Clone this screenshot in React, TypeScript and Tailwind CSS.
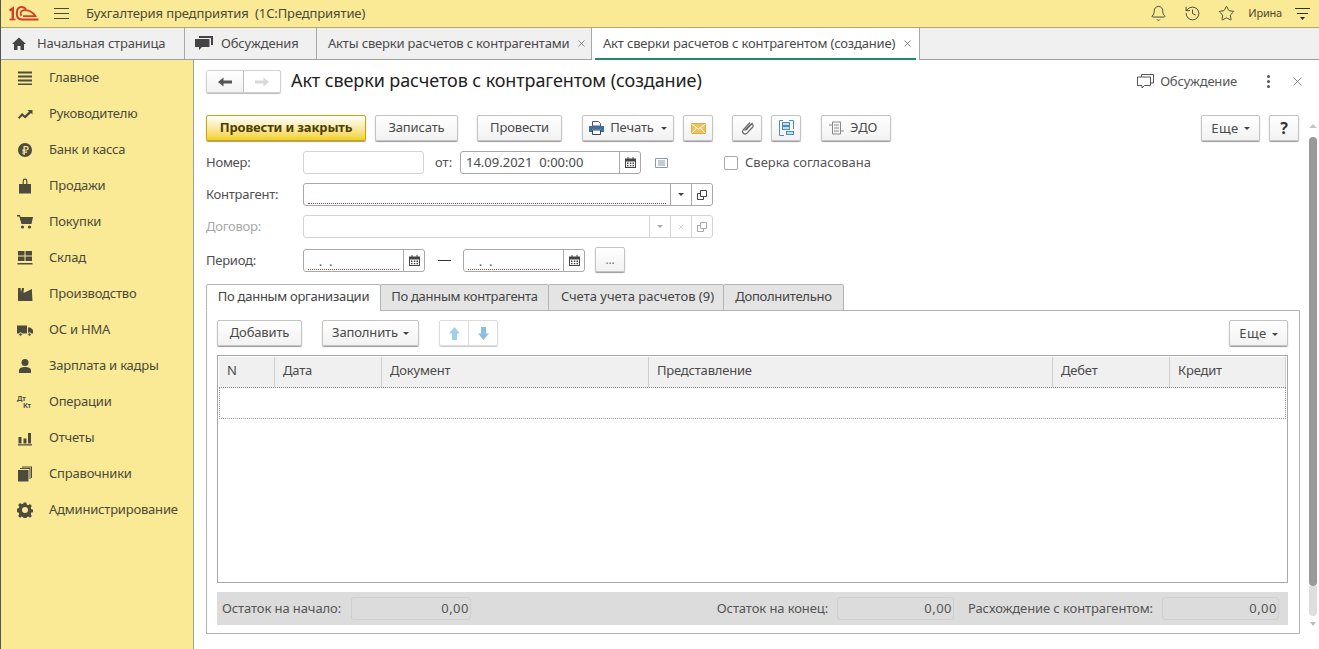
import React from 'react';
import { Bell, History, Star, X } from 'lucide-react';

const Caret = ({ className = 'border-t-[#444]' }: { className?: string }) => (
  <span className={`inline-block w-0 h-0 border-x-[3px] border-x-transparent border-t-[3px] ${className}`} />
);

const Logo = () => (
  <svg width="30" height="15" viewBox="0 0 30 15" fill="none" stroke="#cf3f2a" strokeWidth="2" className="block">
    <path d="M0.5 4.5 L3.8 2.4 V13.5" strokeWidth="2.4" />
    <path d="M0.5 13.5 H6.5" strokeWidth="1.6" />
    <path d="M17 3 C15.5 1.6 13.8 1 12.4 1 C9.2 1 7.8 4 7.8 7.5 C7.8 11 9.8 13.4 13 13.4 H29.5" />
    <path d="M12.5 9.8 C11 8 11.6 5 14 4.4 C18.5 3.4 24 5.5 26.5 10.2 H14" strokeWidth="1.7" />
  </svg>
);

// sidebar section glyphs, all 16x16 filled
const SectionIcon = ({ name }: { name: string }) => {
  const shapes: Record<string, React.ReactNode> = {
    main: <path d="M1 1.5h14v2H1zM1 5.5h14v2H1zM1 9.5h14v2H1zM1 13.5h14v1.5H1z" />,
    chart: <path d="M1 11.5 5 7l3 2.5 4-4-1.6-1.4H15.5V8.5L14 7 8.2 12.4 5.2 10 2.2 13z" />,
    bank: (
      <>
        <circle cx="8" cy="8" r="7" />
        <path d="M6.5 4h3a2.2 2.2 0 0 1 0 4.6H7.8v1h2.4v1.2H7.8V13H6.5v-1.2H5.3v-1.2h1.2v-1H5.3V7.4h1.2zM7.8 5.2v2.2h1.6a1.1 1.1 0 0 0 0-2.2z" fill="#fae995" />
      </>
    ),
    sales: <path d="M2 6h3.6V3a2.4 2.4 0 0 1 4.8 0v3H14v9.5H2zM6.8 6h2.4V3a1.2 1.2 0 0 0-2.4 0z" />,
    cart: (
      <>
        <path d="M0 1h3l.5 2H16l-1.5 7H4.5L2.3 2.5H0z" />
        <circle cx="5.5" cy="13" r="1.6" />
        <circle cx="12.5" cy="13" r="1.6" />
      </>
    ),
    stock: <path d="M1 1h6.5v4.5H1zM8.5 1H15v4.5H8.5zM1 6.5h6.5V11H1zM8.5 6.5H15V11H8.5zM0.5 13h15v1.5H0.5z" />,
    factory: <path d="M1 2h2.5l.5 4 1-4h2L6.5 7l8.5-4v4.5L15.5 15H1z" />,
    truck: (
      <>
        <path d="M0 3.5h10v8H0zM11 5.5h2.5L16 8v3.5h-5z" />
        <circle cx="3.5" cy="12.5" r="1.7" stroke="#fae995" />
        <circle cx="12.5" cy="12.5" r="1.7" stroke="#fae995" />
      </>
    ),
    person: (
      <>
        <circle cx="8" cy="4.5" r="3.5" />
        <path d="M2 15v-2.5C2 10 5 9 8 9s6 1 6 3.5V15z" />
      </>
    ),
    reports: <path d="M1.5 7h3v6.5h-3zM6.5 8.5h3v5h-3zM11 3h3v10.5h-3zM1 14.3h14V15.5H1z" />,
    books: <path d="M1 4h10.5v11.5H1zM3 2h10.5v11H12.5V3H3zM5 0.5h10V12H14V1.5H5z" />,
    gear: (
      <path
        fillRule="evenodd"
        d="M6.7 0.5h2.6l.4 2 1.5.7 1.8-1.1 1.8 1.8-1.1 1.8.7 1.5 2 .4v2.6l-2 .4-.7 1.5 1.1 1.8-1.8 1.8-1.8-1.1-1.5.7-.4 2H6.7l-.4-2-1.5-.7-1.8 1.1-1.8-1.8 1.1-1.8-.7-1.5-2-.4V6.6l2-.4.7-1.5-1.1-1.8 1.8-1.8 1.8 1.1 1.5-.7zM8 5a3 3 0 1 0 0 6 3 3 0 0 0 0-6z"
      />
    ),
  };
  return (
    <svg width="16" height="16" viewBox="0 0 16 16" fill="#4d4a3e">
      {shapes[name]}
    </svg>
  );
};

const sections = [
  ['main', 'Главное'],
  ['chart', 'Руководителю'],
  ['bank', 'Банк и касса'],
  ['sales', 'Продажи'],
  ['cart', 'Покупки'],
  ['stock', 'Склад'],
  ['factory', 'Производство'],
  ['truck', 'ОС и НМА'],
  ['person', 'Зарплата и кадры'],
  ['dtkt', 'Операции'],
  ['reports', 'Отчеты'],
  ['books', 'Справочники'],
  ['gear', 'Администрирование'],
];

const Btn = ({ className = 'w-[84px]', children }: { className?: string; children: React.ReactNode }) => (
  <button className={`h-[26px] shrink-0 flex items-center justify-center gap-1 rounded-[2px] border border-[#c4c4c4] bg-linear-to-b from-white to-[#f2f2f2] shadow-[0_1px_1px_#999] text-[#4a4a4a] tracking-[-0.15px] ${className}`}>
    {children}
  </button>
);

const Cell = ({ className = 'w-[21px]', children }: { className?: string; children: React.ReactNode }) => (
  <span className={`h-full shrink-0 flex items-center justify-center border-l ${className}`}>{children}</span>
);

const CalendarCell = () => (
  <Cell className="w-[21px] border-[#a8a8a8]">
    <svg width="11" height="11" viewBox="0 0 11 11" fill="#444">
      <path d="M2.5 0h1v1.5h4V0h1v1.5H11V11H0V1.5h2.5zM1 4.5V10h9V4.5z" />
      <path d="M2 5.5h1.5V7H2zM4.8 5.5h1.5V7H4.8zM7.5 5.5H9V7H7.5zM2 8h1.5v1.2H2zM4.8 8h1.5v1.2H4.8zM7.5 8H9v1.2H7.5z" />
    </svg>
  </Cell>
);

const Underline = ({ text = '' }: { text?: string }) => (
  <span className="flex-1 mx-1 mt-[3px] h-[16px] border-b border-dotted border-[#b03a3a] text-[#555] leading-[15px] pl-1 whitespace-pre">{text}</span>
);

const Field = ({ className, muted, children }: { className: string; muted?: boolean; children?: React.ReactNode }) => (
  <div className={`h-[23px] shrink-0 flex items-center rounded-[3px] border bg-white ${muted ? 'border-[#d4d4d4]' : 'border-[#a8a8a8]'} ${className}`}>
    {children}
  </div>
);

const Label = ({ muted, children }: { muted?: boolean; children: React.ReactNode }) => (
  <span className={`w-[97px] shrink-0 tracking-[-0.25px] ${muted ? 'text-[#a8a8a8]' : 'text-[#4f4f4f]'}`}>{children}</span>
);

const Amount = ({ className }: { className: string }) => (
  <div className={`h-[23px] shrink-0 flex items-center justify-end pr-[1px] rounded-[3px] border border-[#cfcfcf] bg-[#dcdcdc] text-[#555] tracking-[0.5px] ${className}`}>0,00</div>
);

const columns = [
  ['w-[56px]', 'N'],
  ['w-[107px]', 'Дата'],
  ['w-[267px]', 'Документ'],
  ['w-[404px]', 'Представление'],
  ['w-[117px]', 'Дебет'],
  ['flex-1', 'Кредит'],
];

const Tab = ({ className, children }: { className: string; children: React.ReactNode }) => (
  <div className={`h-[27px] pb-[2px] flex items-center justify-center rounded-t-[2px] border border-[#b4b4b4] bg-[#e4e4e4] text-[#444] ${className}`}>{children}</div>
);

const TopTab = ({ className, children }: { className: string; children: React.ReactNode }) => (
  <div className={`h-full flex items-center border-r border-[#a8a8a8] text-[#4a4a4a] whitespace-nowrap tracking-[-0.17px] ${className}`}>{children}</div>
);

export default function App() {
  return (
    <div className="h-screen w-full overflow-hidden flex flex-col bg-white text-[13px] border-l border-[#555] [font-family:'Liberation_Sans',Arial,sans-serif]">
      {/* Top bar */}
      <header className="h-[28px] shrink-0 flex items-center bg-[#fae995] border-b border-[#b4a868] text-[#4a4a3a]">
        <div className="ml-[8px] w-[45px]">
          <Logo />
        </div>
        <svg width="15" height="11" viewBox="0 0 15 11" stroke="#4a4a3a" strokeWidth="1">
          <path d="M0 0.5h15M0 5.5h15M0 10.5h15" />
        </svg>
        <span className="ml-[17px] tracking-[-0.12px]">Бухгалтерия предприятия&nbsp; (1С:Предприятие)</span>
        <div className="ml-auto flex items-center">
          <Bell size={17} strokeWidth={1.2} color="#333" />
          <History size={17} strokeWidth={1.2} color="#333" className="ml-[17px]" />
          <Star size={17} strokeWidth={1.2} color="#333" className="ml-[17px]" />
          <span className="ml-[13px] text-[11px] tracking-[-0.2px]">Ирина</span>
          <svg width="15" height="14" viewBox="0 0 15 14" stroke="#333" strokeWidth="1" className="ml-[13px] mr-[9px]">
            <path d="M0 1.5h15M2 6.5h11" />
            <path d="M5 10h5l-2.5 3z" fill="#333" stroke="none" />
          </svg>
        </div>
      </header>

      {/* Open windows */}
      <nav className="h-[32px] shrink-0 flex items-center bg-[#f0f0f0] border-b border-[#a0a0a0]">
        <TopTab className="w-[184px] pl-[11px]">
          <svg width="14" height="13" viewBox="0 0 14 13" fill="#444">
            <path d="M7 0.5 14 7h-2v6H8.5V9h-3v4H2V7H0z" />
          </svg>
          <span className="ml-[11px]">Начальная страница</span>
        </TopTab>
        <TopTab className="w-[132px] pl-[10px]">
          <svg width="18" height="15" viewBox="0 0 18 15" fill="#444">
            <path d="M4 0h14v9h-2V2H4z" />
            <path d="M0 3h14.5v8H7l-3 3v-3H0z" />
          </svg>
          <span className="ml-[8px]">Обсуждения</span>
        </TopTab>
        <TopTab className="w-[275px] pl-[11px]">
          <span>Акты сверки расчетов с контрагентами</span>
          <X size={11} strokeWidth={1.5} color="#555" className="ml-[7px]" />
        </TopTab>
        <div className="w-[328px] h-[32px] bg-white border-r border-[#a8a8a8] flex items-center pl-[11px] relative text-[#4a4a4a] whitespace-nowrap tracking-[-0.17px]">
          <span>Акт сверки расчетов с контрагентом (создание)</span>
          <X size={11} strokeWidth={1.5} color="#555" className="ml-[7px]" />
          <span className="absolute left-[3px] right-[3px] bottom-0 h-[2px] bg-[#1f8a62]" />
        </div>
      </nav>

      <div className="flex-1 min-h-0 flex">
        {/* Sections */}
        <aside className="w-[193px] shrink-0 bg-[#fae995] border-r border-[#a0a0a0]">
          {sections.map(([icon, label]) => (
            <div key={label} className="h-[36px] flex items-center pl-[16px] text-[#4a4a3a] tracking-[-0.2px]">
              <span className="w-[16px] h-[16px] flex flex-col justify-center">
                {icon === 'dtkt' ? (
                  <span className="flex flex-col font-bold text-[7px] leading-[7px] text-[#4f4f4f]">
                    <span>Дт</span>
                    <span className="ml-[6px]">Кт</span>
                  </span>
                ) : (
                  <SectionIcon name={icon} />
                )}
              </span>
              <span className="ml-[16px]">{label}</span>
            </div>
          ))}
        </aside>

        <main className="flex-1 min-w-0 flex flex-col">
          {/* Form header */}
          <div className="h-[55px] shrink-0 flex items-start pt-[10px] pl-[12px] pr-[14px]">
            <div className="h-[23px] w-[75px] flex rounded-[2px] border border-[#d0d0d0] shadow-[0_1px_1px_#bbb]">
              <span className="w-[37px] flex items-center justify-center border-r border-[#bbb] bg-linear-to-b from-white to-[#f2f2f2]">
                <svg width="14" height="10" viewBox="0 0 14 10" fill="#555">
                  <path d="M0 5 5.5 0.5v3H14v3H5.5v3z" />
                </svg>
              </span>
              <span className="flex-1 flex items-center justify-center">
                <svg width="14" height="10" viewBox="0 0 14 10" fill="#d8d8d8">
                  <path d="M14 5 8.5 0.5v3H0v3h8.5v3z" />
                </svg>
              </span>
            </div>
            <h1 className="ml-[10px] text-[18px] leading-[21px] text-[#222] tracking-[-0.1px]">Акт сверки расчетов с контрагентом (создание)</h1>
            <div className="ml-auto h-[23px] flex items-center text-[#555] tracking-[-0.2px]">
              <svg width="17" height="15" viewBox="0 0 17 15" fill="none" stroke="#555">
                <path d="M4.5 3V0.5h12V9H13.5" />
                <path d="M0.5 3h13v8.5H7.5L5 14v-2.5H0.5z" />
              </svg>
              <span className="ml-[6px]">Обсуждение</span>
              <span className="ml-[30px] flex flex-col gap-[2px]">
                <i className="block w-[3px] h-[3px] rounded-full bg-[#555]" />
                <i className="block w-[3px] h-[3px] rounded-full bg-[#555]" />
                <i className="block w-[3px] h-[3px] rounded-full bg-[#555]" />
              </span>
              <X size={15} strokeWidth={1} color="#555" className="ml-[20px]" />
            </div>
          </div>

          <div className="flex-1 min-h-0 flex">
            {/* Form body */}
            <div className="w-[1106px] shrink-0 pl-[12px]">
              <div className="flex">
                <Btn className="w-[160px] border-[#c9a800] from-[#ffe600] to-[#f5d000] font-bold text-[#4a4000]">Провести и закрыть</Btn>
                <Btn className="w-[83px] ml-[9px]">Записать</Btn>
                <Btn className="w-[85px] ml-[19px]">Провести</Btn>
                <Btn className="w-[92px] ml-[20px]">
                  <svg width="15" height="14" viewBox="0 0 15 14">
                    <path d="M3.5 0.5h6l2 2V5h-8z" fill="#fff" stroke="#556" />
                    <path d="M0 5h15v6h-3V8.5H3V11H0z" fill="#3f6f9f" />
                    <path d="M3.5 9h8v4.5h-8z" fill="#fff" stroke="#345" />
                  </svg>
                  <span className="ml-[2px]">Печать</span>
                  <Caret className="border-t-[#444] ml-[3px]" />
                </Btn>
                <Btn className="w-[30px] ml-[9px]">
                  <svg width="15" height="11" viewBox="0 0 15 11">
                    <rect width="15" height="11" rx="1" fill="#f0c05a" stroke="#d09a30" />
                    <path d="M0.5 1 7.5 6l7-5M0.5 10.5 5.5 5M14.5 10.5 9.5 5" fill="none" stroke="#fff" />
                  </svg>
                </Btn>
                <Btn className="w-[30px] ml-[19px]">
                  <svg width="15" height="15" viewBox="0 0 15 15" fill="none" stroke="#666" strokeWidth="1.2">
                    <path d="M10 1.5 3 9a2.6 2.6 0 0 0 3.6 3.6l6.2-6.6a1.7 1.7 0 0 0-2.4-2.4L4.6 9.5" />
                    <path d="M12.5 2 6 9" />
                  </svg>
                </Btn>
                <Btn className="w-[30px] ml-[9px]">
                  <svg width="15" height="16" viewBox="0 0 15 16" fill="none" stroke="#4f8db5">
                    <path d="M4 0.5H0.5V15.5H5M10 0.5H14.5V9" />
                    <rect x="3.5" y="2.5" width="7" height="3" fill="#bfe0f2" />
                    <rect x="3.5" y="6.5" width="7" height="3" fill="#bfe0f2" />
                    <rect x="7.5" y="11.5" width="7" height="3" fill="#bfe0f2" />
                  </svg>
                </Btn>
                <Btn className="w-[70px] ml-[20px] justify-start pl-[7px]">
                  <svg width="15" height="14" viewBox="0 0 15 14" fill="none" stroke="#888">
                    <path d="M3.5 1h8v12h-8zM5 4h5M5 7h5M5 10h5M0 4h3M12 10h3" />
                  </svg>
                  <span className="ml-[2px]">ЭДО</span>
                </Btn>
                <Btn className="w-[59px] ml-auto pt-px tracking-[0.4px]">
                  <span>Еще</span>
                  <Caret className="border-t-[#444] ml-[1px]" />
                </Btn>
                <Btn className="w-[30px] ml-[9px] mr-px text-[16px] font-bold text-[#333]">?</Btn>
              </div>

              <div className="flex items-center mt-[10px]">
                <Label>Номер:</Label>
                <Field muted className="w-[121px]" />
                <span className="ml-[11px] w-[25px] text-[#4f4f4f]">от:</span>
                <Field className="w-[181px]">
                  <span className="flex-1 pl-[5px] text-[#4a4a4a] whitespace-pre">14.09.2021  0:00:00</span>
                  <CalendarCell />
                </Field>
                <svg width="13" height="10" viewBox="0 0 13 10" fill="none" stroke="#8a9aa8" className="ml-[14px]">
                  <path d="M0.5 0.5h12v9h-12zM3 3h7M3 5h7M3 7h7" />
                </svg>
                <span className="ml-[56px] w-[14px] h-[14px] rounded-[2px] border border-[#a8a8a8]" />
                <span className="ml-[7px] text-[#555]">Сверка согласована</span>
              </div>

              <div className="flex items-center mt-[9px]">
                <Label>Контрагент:</Label>
                <Field className="w-[410px]">
                  <Underline />
                  <Cell className="w-[21px] border-[#a8a8a8]"><Caret /></Cell>
                  <Cell className="w-[21px] border-[#a8a8a8]">
                    <svg width="10" height="10" viewBox="0 0 10 10" fill="none" stroke="#444"><path d="M3.5 0.5h6v6h-6zM3.5 3.5h-3v6h6v-3" /></svg>
                  </Cell>
                </Field>
              </div>

              <div className="flex items-center mt-[9px]">
                <Label muted>Договор:</Label>
                <Field muted className="w-[410px]">
                  <span className="flex-1" />
                  <Cell className="w-[21px] border-[#d4d4d4]"><Caret className="border-t-[#aaa]" /></Cell>
                  <Cell className="w-[21px] border-[#d4d4d4]"><X size={8} strokeWidth={1.5} color="#aaa" /></Cell>
                  <Cell className="w-[21px] border-[#d4d4d4]">
                    <svg width="10" height="10" viewBox="0 0 10 10" fill="none" stroke="#aaa"><path d="M3.5 0.5h6v6h-6zM3.5 3.5h-3v6h6v-3" /></svg>
                  </Cell>
                </Field>
              </div>

              <div className="flex items-end mt-[9px]">
                <Label><span className="block leading-[24px]">Период:</span></Label>
                <Field className="w-[122px]">
                  <Underline text={'  .  .'} />
                  <CalendarCell />
                </Field>
                <span className="w-[13px] h-px bg-[#333] ml-[13px] mr-[12px] mb-[11px]" />
                <Field className="w-[122px]">
                  <Underline text={'  .  .'} />
                  <CalendarCell />
                </Field>
                <Btn className="w-[30px] h-[25px]! ml-[10px] text-[#777] text-[12px]">...</Btn>
              </div>

              <div className="flex mt-[12px] relative z-10 tracking-[-0.28px]">
                <Tab className="w-[175px] bg-white border-b-white text-[#444]">По данным организации</Tab>
                <Tab className="w-[169px] -ml-px">По данным контрагента</Tab>
                <Tab className="w-[176px] -ml-px pl-[3px] tracking-normal">Счета учета расчетов (9)</Tab>
                <Tab className="w-[121px] -ml-px">Дополнительно</Tab>
              </div>

              <section className="-mt-px h-[324px] border border-[#b4b4b4] pl-[10px] pr-[11px] pt-[9px]">
                <div className="flex">
                  <Btn className="w-[85px]">Добавить</Btn>
                  <Btn className="w-[97px] ml-[20px]">
                    <span>Заполнить</span>
                    <Caret className="border-t-[#444] ml-[1px]" />
                  </Btn>
                  <div className="ml-[20px] h-[26px] w-[59px] flex rounded-[2px] border border-[#dcdcdc] shadow-[0_1px_1px_#ccc]">
                    <span className="flex-1 flex items-center justify-center border-r border-[#dcdcdc]">
                      <svg width="11" height="13" viewBox="0 0 11 13" fill="#9fd0e6"><path d="M5.5 0 11 6.5H8V13H3V6.5H0z" /></svg>
                    </span>
                    <span className="flex-1 flex items-center justify-center">
                      <svg width="11" height="13" viewBox="0 0 11 13" fill="#8fbde0"><path d="M5.5 13 11 6.5H8V0H3v6.5H0z" /></svg>
                    </span>
                  </div>
                  <Btn className="w-[59px] ml-auto pt-[2px] tracking-[0.4px]">
                    <span>Еще</span>
                    <Caret className="border-t-[#444] ml-[1px]" />
                  </Btn>
                </div>

                <div className="mt-[9px] h-[228px] border border-[#a8a8a8] p-px">
                  <div className="h-[31px] flex bg-[#f0f0f0] border-b border-dotted border-[#888] text-[#4a4a4a] tracking-[-0.2px]">
                    {columns.map(([width, title]) => (
                      <div key={title} className={`${width} flex items-center pl-[8px] pb-[2px] border-r border-[#cfcfcf]`}>{title}</div>
                    ))}
                  </div>
                  <div className="h-[31px] border-x border-b border-dotted border-[#999]" />
                </div>

                <div className="mt-[9px] h-[33px] flex items-center bg-[#dcdcdc] pl-[5px] pr-[9px] text-[#555] tracking-[-0.1px]">
                  <span className="w-[129px]">Остаток на начало:</span>
                  <Amount className="w-[120px]" />
                  <span className="ml-auto mr-[9px]">Остаток на конец:</span>
                  <Amount className="w-[117px]" />
                  <span className="ml-[14px] mr-[9px]">Расхождение с контрагентом:</span>
                  <Amount className="w-[117px]" />
                </div>
              </section>
            </div>

            {/* Scrollbar */}
            <div className="w-[8px] ml-[9px] flex flex-col items-center">
              <span className="mt-[9px] w-0 h-0 border-x-[4px] border-x-transparent border-b-[4px] border-b-[#c4c4c4]" />
              <span className="mt-[9px] w-[8px] h-[449px] rounded-[4px] bg-[#999]" />
              <span className="w-[8px] h-[30px] rounded-b-[4px] bg-[#dedede]" />
              <span className="mt-[6px] w-0 h-0 border-x-[3px] border-x-transparent border-t-[4px] border-t-[#bbb]" />
            </div>
          </div>
        </main>
      </div>
    </div>
  );
}
